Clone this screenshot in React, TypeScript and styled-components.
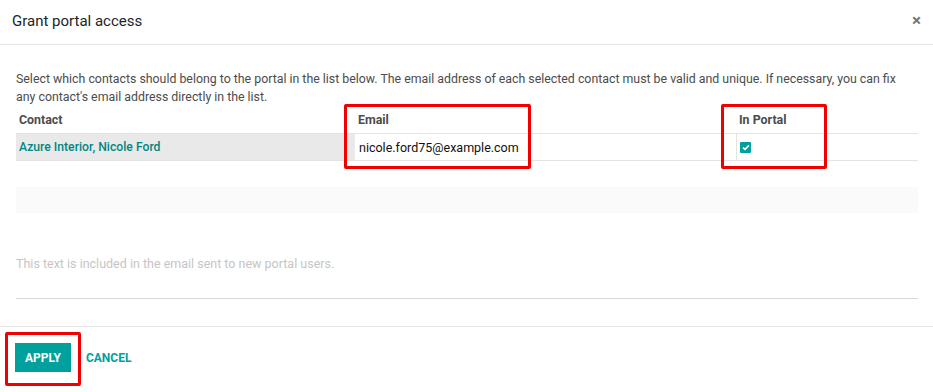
import React from "react";
import styled, { createGlobalStyle } from "styled-components";

const Global = createGlobalStyle`
  html, body { margin: 0; padding: 0; background: #fff; }
  body { font-family: Roboto, "Noto Sans", Arial, sans-serif; }
  * { box-sizing: border-box; }
`;

const Modal = styled.div`
  width: 933px;
  height: 392px;
  display: flex;
  flex-direction: column;
  background: #fff;
  position: relative;
`;

const Header = styled.div`
  height: 45px;
  flex: none;
  display: flex;
  align-items: center;
  justify-content: space-between;
  padding: 0 12px 0 12px;
  border-bottom: 1px solid #e6e6e6;
`;

const Title = styled.h4`
  margin: 0;
  font-size: 15px;
  font-weight: 400;
  color: #212529;
  padding-bottom: 2px;
`;

const Close = styled.span`
  font-size: 17px;
  font-weight: 700;
  color: #777;
  line-height: 1;
  padding-bottom: 3px;
`;

const Body = styled.div`
  padding: 25px 15px 0 16px;
  flex: 1;
`;

const Intro = styled.p`
  margin: 0;
  font-size: 12.35px;
  line-height: 18px;
  color: #4c4c4c;
`;

const Table = styled.div`
  display: grid;
  grid-template-columns: 339px 381px 1fr;
  font-size: 13px;
`;

const HeadCell = styled.div`
  height: 28px;
  display: flex;
  align-items: center;
  padding-left: 3px;
  font-size: 12.4px;
  font-weight: 700;
  color: #4c4c4c;
  border-bottom: 1px solid #e4e4e4;
`;

const Cell = styled.div<{ $gray?: boolean; $divider?: boolean }>`
  height: 27px;
  display: flex;
  align-items: center;
  padding-left: 3px;
  border-bottom: 1px solid #e4e4e4;
  background: ${(p) => (p.$gray ? "#e9e9e9" : "#fff")};
  border-left: ${(p) => (p.$divider ? "1px solid #e4e4e4" : "none")};
`;

const ContactLink = styled.span`
  color: #008784;
  font-weight: 500;
  font-size: 12.2px;
`;

const EmailText = styled.span`
  color: #111;
  font-size: 12.5px;
  padding-left: 1px;
`;

const Check = styled.span`
  width: 11px;
  height: 11px;
  background: #00a09d;
  border-radius: 1px;
  display: inline-flex;
  align-items: center;
  justify-content: center;
`;

const EmptyRow = styled.div`
  height: 26px;
  margin-top: 26px;
  background: #fafafa;
`;

const Message = styled.div`
  margin-top: 40px;
  height: 46px;
  border-bottom: 1px solid #d8d8d8;
  font-size: 12.5px;
  color: #c5c5c5;
  padding-top: 3px;
`;

const Footer = styled.div`
  height: 66px;
  flex: none;
  border-top: 1px solid #e6e6e6;
  display: flex;
  align-items: center;
  gap: 15px;
  padding: 0 15px 4px;
`;

const Button = styled.button<{ $primary?: boolean }>`
  font-family: Roboto, "Noto Sans", Arial, sans-serif;
  font-size: 12px;
  font-weight: 700;
  text-transform: uppercase;
  border: none;
  border-radius: 0;
  height: 29px;
  padding: 0 ${(p) => (p.$primary ? "10px" : "0")};
  background: ${(p) => (p.$primary ? "#00a09d" : "transparent")};
  color: ${(p) => (p.$primary ? "#fff" : "#00a09d")};
  cursor: pointer;
`;

const Highlight = styled.div`
  position: absolute;
  border: 3px solid #f20000;
  border-radius: 2px;
  pointer-events: none;
`;

export default function App() {
  return (
    <>
      <Global />
      <Modal>
        <Header>
          <Title>Grant portal access</Title>
          <Close>×</Close>
        </Header>
        <Body>
          <Intro>
            Select which contacts should belong to the portal in the list below. The email address of each selected
            contact must be valid and unique. If necessary, you can fix any contact's email address directly in the list.
          </Intro>
          <Table>
            <HeadCell>Contact</HeadCell>
            <HeadCell>Email</HeadCell>
            <HeadCell>In Portal</HeadCell>
            <Cell $gray>
              <ContactLink>Azure Interior, Nicole Ford</ContactLink>
            </Cell>
            <Cell>
              <EmailText>nicole.ford75@example.com</EmailText>
            </Cell>
            <Cell $divider>
              <Check>
                <svg width="8" height="7" viewBox="0 0 8 7">
                  <path d="M1 3.6 L3 5.4 L7 1.4" stroke="#fff" strokeWidth="1.6" fill="none" />
                </svg>
              </Check>
            </Cell>
          </Table>
          <EmptyRow />
          <Message>This text is included in the email sent to new portal users.</Message>
        </Body>
        <Footer>
          <Button $primary>Apply</Button>
          <Button>Cancel</Button>
        </Footer>
        <Highlight style={{ left: 344, top: 104, width: 187, height: 65 }} />
        <Highlight style={{ left: 721, top: 104, width: 106, height: 65 }} />
        <Highlight style={{ left: 5, top: 332, width: 76, height: 54 }} />
      </Modal>
    </>
  );
}
